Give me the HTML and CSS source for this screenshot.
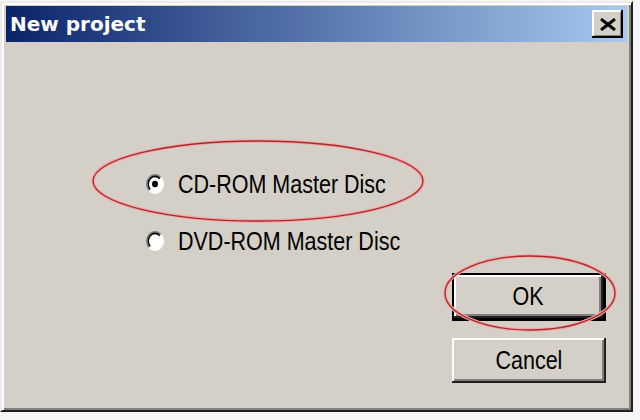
FILE: index.html
```html
<!DOCTYPE html>
<html lang="en">

<head>
    <meta charset="UTF-8">
    <title>New project</title>
    <link rel="stylesheet" href="styles.css">
</head>

<body>
    <div class="window">
        <div class="titlebar">
            <span class="title">New project</span>
            <button class="close-btn" title="Close">
                <svg width="18" height="13" viewBox="0 0 18 13">
                    <path d="M2 1 L16 12 M16 1 L2 12" stroke="#000" stroke-width="3" fill="none" />
                </svg>
            </button>
        </div>

        <div class="dialog-body">
            <div class="options">
                <label class="option">
                    <span class="radio">
                        <svg width="18" height="20" viewBox="0 0 12 12" preserveAspectRatio="none">
                            <circle cx="6" cy="6" r="5.5" fill="#fff" />
                            <path d="M2.1 9.9 A5.5 5.5 0 0 1 9.9 2.1" stroke="#808080" stroke-width="1" fill="none" />
                            <path d="M2.8 9.2 A4.5 4.5 0 0 1 9.2 2.8" stroke="#000" stroke-width="1" fill="none" />
                            <path d="M9.9 2.1 A5.5 5.5 0 0 1 2.1 9.9" stroke="#fff" stroke-width="1" fill="none" />
                            <circle cx="6" cy="6" r="2" fill="#000" />
                        </svg>
                    </span>
                    <span class="text">CD-ROM Master Disc</span>
                </label>
                <label class="option">
                    <span class="radio">
                        <svg width="18" height="20" viewBox="0 0 12 12" preserveAspectRatio="none">
                            <circle cx="6" cy="6" r="5.5" fill="#fff" />
                            <path d="M2.1 9.9 A5.5 5.5 0 0 1 9.9 2.1" stroke="#808080" stroke-width="1" fill="none" />
                            <path d="M2.8 9.2 A4.5 4.5 0 0 1 9.2 2.8" stroke="#000" stroke-width="1" fill="none" />
                            <path d="M9.9 2.1 A5.5 5.5 0 0 1 2.1 9.9" stroke="#fff" stroke-width="1" fill="none" />
                        </svg>
                    </span>
                    <span class="text">DVD-ROM Master Disc</span>
                </label>
            </div>

            <div class="buttons">
                <button class="btn btn-default"><span class="text">OK</span></button>
                <button class="btn"><span class="text">Cancel</span></button>
            </div>
        </div>
    </div>

    <!-- hand-drawn red marks over the dialog -->
    <svg class="marks" width="640" height="420" viewBox="0 0 640 420">
        <g fill="none">
            <ellipse cx="258" cy="181" rx="165" ry="40" stroke="#f2a8a8" stroke-width="3.5" />
            <ellipse cx="258" cy="181" rx="165" ry="40" stroke="#a82a2a" stroke-width="1.3" />
            <ellipse cx="530" cy="293" rx="85" ry="37" stroke="#f2a8a8" stroke-width="3.5" />
            <ellipse cx="530" cy="293" rx="85" ry="37" stroke="#a82a2a" stroke-width="1.3" />
        </g>
    </svg>
</body>

</html>
```

FILE: styles.css
```css
:root {
    --face: #d4d0c8;
    --shadow: #808080;
    --dark: #202020;
    --title-from: #0a246a;
    --title-to: #a6caf0;
}

body {
    margin: 0;
    width: 640px;
    height: 420px;
    background: #f6f6f6;
    font-family: 'Liberation Sans', Arial, sans-serif;
    color: #000;
    overflow: hidden;
}

.window {
    box-sizing: border-box;
    width: 633px;
    height: 411px;
    margin-top: 1px;
    padding: 3px 4px 4px 4px;
    background: var(--face);
    border: 2px solid;
    border-color: #ececec var(--dark) var(--dark) #ececec;
    box-shadow: inset 2px 2px #fff, inset -2px -2px var(--shadow);
    display: flex;
    flex-direction: column;
}

.titlebar {
    height: 36px;
    display: flex;
    align-items: center;
    justify-content: space-between;
    padding: 0 4px;
    background: linear-gradient(90deg, var(--title-from) 0%, var(--title-to) 100%);
}

.title {
    color: #fff;
    font-family: 'DejaVu Sans', Tahoma, sans-serif;
    font-weight: bold;
    font-size: 20px;
}

.close-btn {
    width: 31px;
    height: 28px;
    padding: 0;
    border: none;
    background: var(--face);
    box-shadow: inset -2px -2px #000, inset 2px 2px #fff, inset -3px -3px var(--shadow);
    display: flex;
    align-items: center;
    justify-content: center;
}

.dialog-body {
    flex: 1;
    display: grid;
    grid-template-columns: 1fr auto;
    padding: 0 21px 0 140px;
}

.options {
    padding-top: 127px;
    display: flex;
    flex-direction: column;
    gap: 27px;
}

.option {
    height: 30px;
    display: flex;
    align-items: center;
    gap: 14px;
}

.radio {
    display: flex;
    width: 18px;
    height: 20px;
}

.text {
    display: inline-block;
    font-size: 25px;
    white-space: nowrap;
    transform: scaleX(0.86);
    transform-origin: left center;
}

.buttons {
    padding-top: 231px;
    display: flex;
    flex-direction: column;
    gap: 17px;
}

.btn {
    width: 154px;
    height: 45px;
    padding: 0;
    border: none;
    background: var(--face);
    font-family: inherit;
    box-shadow: inset -2px -2px #202020, inset 2px 2px #fff, inset -4px -4px var(--shadow);
    display: flex;
    align-items: center;
    justify-content: center;
}

.btn .text {
    transform-origin: center;
}

.btn-default {
    height: 48px;
    border: 2px solid #000;
    border-bottom-width: 3px;
    border-right-width: 3px;
}

.marks {
    position: absolute;
    top: 0;
    left: 0;
    pointer-events: none;
}
```
